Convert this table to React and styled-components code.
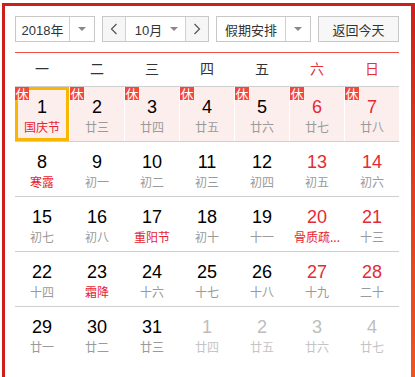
import React from 'react';
import styled, { createGlobalStyle } from 'styled-components';

const GlobalStyle = createGlobalStyle`
  html, body {
    margin: 0;
    padding: 0;
    background: #fff;
  }
  body {
    font-family: "Liberation Sans", "Noto Sans CJK SC", Arial, sans-serif;
  }
`;

const Page = styled.div`
  display: flex;
  width: 415px;
  height: 377px;
  overflow: hidden;
`;

const Frame = styled.div`
  margin: 3px 0 3px 2px;
  border: 3px solid #cc1f1a;
  border-right: none;
  padding: 10px 12px 0 10px;
  width: 384px;
  height: 363px;
`;

const Edge = styled.div`
  width: 4px;
  margin-top: 3px;
  background: linear-gradient(#cf1f1a, #e33a1f 45%, #f2541f);
`;

const Toolbar = styled.div`
  display: flex;
  align-items: center;
  gap: 7px;
  height: 26px;
`;

const Select = styled.div`
  display: flex;
  width: ${(p) => p.width}px;
  height: 26px;
  box-sizing: border-box;
  border: 1px solid #c8c8c8;
  background: #fff;
  font-size: 13px;
  color: #333;
`;

const SelectText = styled.div`
  flex: 1;
  display: flex;
  align-items: center;
  justify-content: center;
  border-right: 1px solid #d0d0d0;
`;

const Caret = styled.div`
  width: 24px;
  display: flex;
  align-items: center;
  justify-content: center;
  &::after {
    content: '';
    border-left: 4px solid transparent;
    border-right: 4px solid transparent;
    border-top: 4px solid #888;
  }
`;

const MonthGroup = styled.div`
  display: flex;
  height: 26px;
  box-sizing: border-box;
  border: 1px solid #c8c8c8;
  font-size: 13px;
  color: #333;
`;

const Arrow = styled.div`
  width: 22px;
  display: flex;
  align-items: center;
  justify-content: center;
  background: #f6f6f6;
  border-left: ${(p) => (p.right ? '1px solid #d0d0d0' : 'none')};
  border-right: ${(p) => (p.right ? 'none' : '1px solid #d0d0d0')};
`;

const MonthPick = styled.div`
  width: 57px;
  display: flex;
  align-items: center;
  justify-content: center;
  gap: 8px;
  padding-left: 2px;
  &::after {
    content: '';
    border-left: 4px solid transparent;
    border-right: 4px solid transparent;
    border-top: 4px solid #888;
  }
`;

const TodayButton = styled.div`
  margin-left: auto;
  width: 81px;
  height: 26px;
  box-sizing: border-box;
  border: 1px solid #c8c8c8;
  background: #f7f7f7;
  display: flex;
  align-items: center;
  justify-content: center;
  font-size: 13px;
  color: #333;
`;

const Divider = styled.div`
  margin-top: 10px;
  height: 1px;
  background: #f0524a;
`;

const WeekHeader = styled.div`
  display: grid;
  grid-template-columns: repeat(7, 54px);
  column-gap: 1px;
  height: 33px;
  border-bottom: 1px solid #cfcfcf;
`;

const WeekDay = styled.div`
  line-height: 33px;
  text-align: center;
  font-size: 14px;
  color: ${(p) => (p.weekend ? '#e8323a' : '#333')};
`;

const Row = styled.div`
  display: grid;
  grid-template-columns: repeat(7, 54px);
  column-gap: 1px;
  height: 54px;
  border-bottom: ${(p) => (p.last ? 'none' : '1px solid #cfcfcf')};
`;

const Cell = styled.div`
  position: relative;
  box-sizing: border-box;
  padding-top: ${(p) => (p.selected ? 7 : 10)}px;
  background: ${(p) => (p.rest ? '#fdeeee' : '#fff')};
  border: ${(p) => (p.selected ? '3px solid #f8b600' : 'none')};
  display: flex;
  flex-direction: column;
  align-items: center;
`;

const Badge = styled.div`
  position: absolute;
  top: ${(p) => (p.selected ? -3 : 0)}px;
  left: ${(p) => (p.selected ? -3 : 0)}px;
  width: 14px;
  height: 13px;
  background: #f2473a;
  color: #fff;
  font-size: 13px;
  line-height: 13px;
  text-align: center;
  font-family: "Noto Sans CJK SC", sans-serif;
`;

const Day = styled.div`
  font-size: 18px;
  line-height: 20px;
  color: ${(p) => (p.other ? '#bdbdbd' : p.weekend ? '#e52a33' : '#000')};
`;

const Lunar = styled.div`
  margin-top: 2px;
  font-size: 12px;
  line-height: 16px;
  white-space: nowrap;
  font-family: "Noto Sans CJK SC", sans-serif;
  color: ${(p) => (p.festival ? '#e8242e' : p.other ? '#c4c4c4' : '#9a9a9a')};
`;

const Chevron = ({ right }) => (
  <svg width="8" height="12" viewBox="0 0 8 12" fill="none" stroke="#555" strokeWidth="1.2">
    <path d={right ? 'M1.5 1 L6.5 6 L1.5 11' : 'M6.5 1 L1.5 6 L6.5 11'} />
  </svg>
);

const weekDays = ['一', '二', '三', '四', '五', '六', '日'];

const weeks = [
  [
    [1, '国庆节', 'f'], [2, '廿三'], [3, '廿四'], [4, '廿五'], [5, '廿六'], [6, '廿七'], [7, '廿八'],
  ],
  [
    [8, '寒露', 'f'], [9, '初一'], [10, '初二'], [11, '初三'], [12, '初四'], [13, '初五'], [14, '初六'],
  ],
  [
    [15, '初七'], [16, '初八'], [17, '重阳节', 'f'], [18, '初十'], [19, '十一'], [20, '骨质疏...', 'f'], [21, '十三'],
  ],
  [
    [22, '十四'], [23, '霜降', 'f'], [24, '十六'], [25, '十七'], [26, '十八'], [27, '十九'], [28, '二十'],
  ],
  [
    [29, '廿一'], [30, '廿二'], [31, '廿三'], [1, '廿四', 'o'], [2, '廿五', 'o'], [3, '廿六', 'o'], [4, '廿七', 'o'],
  ],
];

export default function App() {
  return (
    <Page>
      <GlobalStyle />
      <Frame>
        <Toolbar>
          <Select width={80}>
            <SelectText>2018年</SelectText>
            <Caret />
          </Select>
          <MonthGroup>
            <Arrow><Chevron /></Arrow>
            <MonthPick>10月</MonthPick>
            <Arrow right><Chevron right /></Arrow>
          </MonthGroup>
          <Select width={95}>
            <SelectText>假期安排</SelectText>
            <Caret />
          </Select>
          <TodayButton>返回今天</TodayButton>
        </Toolbar>
        <Divider />
        <WeekHeader>
          {weekDays.map((d, i) => (
            <WeekDay key={d} weekend={i > 4}>{d}</WeekDay>
          ))}
        </WeekHeader>
        {weeks.map((week, w) => (
          <Row key={w} last={w === weeks.length - 1}>
            {week.map(([day, lunar, kind], i) => {
              const rest = w === 0;
              const selected = w === 0 && i === 0;
              const other = kind === 'o';
              return (
                <Cell key={i} rest={rest} selected={selected}>
                  {rest && <Badge selected={selected}>休</Badge>}
                  <Day weekend={i > 4} other={other}>{day}</Day>
                  <Lunar festival={kind === 'f'} other={other}>{lunar}</Lunar>
                </Cell>
              );
            })}
          </Row>
        ))}
      </Frame>
      <Edge />
    </Page>
  );
}
